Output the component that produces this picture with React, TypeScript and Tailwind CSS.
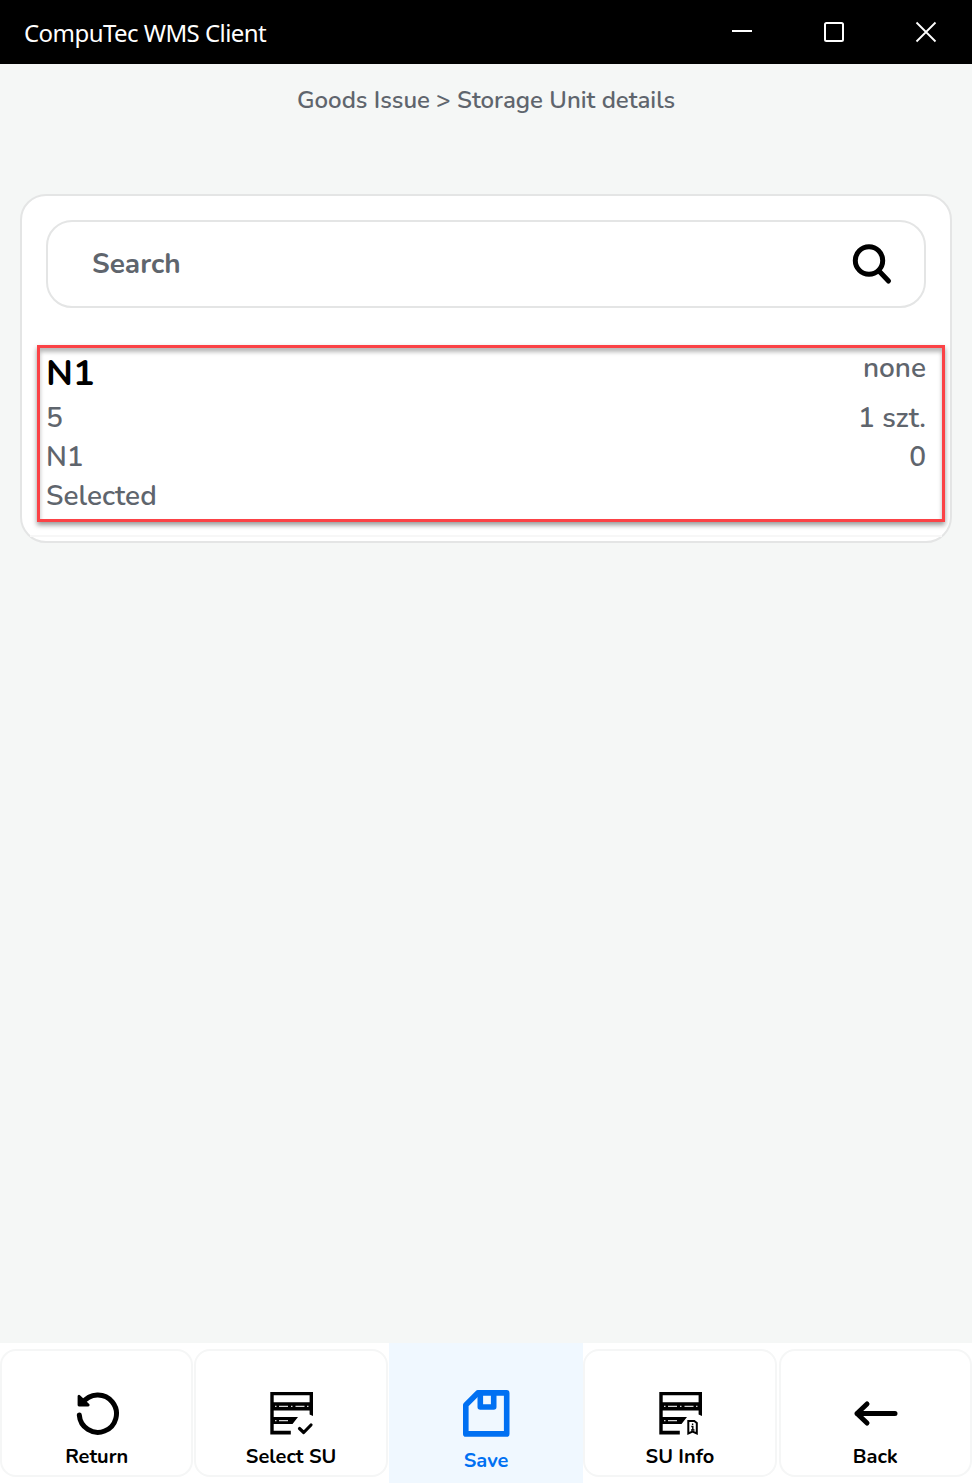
import type { ReactNode } from "react";

const Rack = ({ children }: { children: ReactNode }) => (
  <svg viewBox="0 0 48 48" className="h-12 w-12">
    <path
      d="M2.300 2H45v24l-3.400-1.600V20.600H5.700V27H30l-5.500 7H5.700v6.800h17.100v3.700H2.300ZM5.700 5.200v7H41.600v-7Z"
      fill="#000"
      fillRule="evenodd"
    />
    <path
      d="M11 16.300h9M27.500 16.300h9M7 16.300h1.500M23 16.300h1.500M39 16.300h1.500M11 30.600h9M7 30.600h1.500"
      stroke="#d4d4d4"
      strokeWidth="1.300"
    />
    {children}
  </svg>
);

const ReturnIcon = () => (
  <svg viewBox="0 0 48 48" className="h-12 w-12" fill="none" stroke="#000" strokeLinecap="round">
    <path d="M6.300 25A18.600 18.600 0 1 0 9.500 13.200" strokeWidth="5" />
    <path d="M6 6.200v8.800h9.200Z" fill="#000" strokeWidth="2.800" strokeLinejoin="round" />
  </svg>
);

const SelectIcon = () => (
  <Rack>
    <path d="m31.500 38.500 4.200 4L43 35" fill="none" stroke="#000" strokeWidth="3.200" strokeLinecap="round" strokeLinejoin="round" />
  </Rack>
);

const InfoIcon = () => (
  <Rack>
    <path d="M31.300 31h6l2.500 2v10.500l-4.200-2-4.300 2Z" fill="none" stroke="#000" strokeWidth="2" />
    <path d="M35.600 33.500v1.500M34.300 36.500h1.500V40M34 40h3.500" fill="none" stroke="#000" strokeWidth="1.400" />
  </Rack>
);

const SaveIcon = () => (
  <svg viewBox="0 0 48 48" className="h-12 w-12" fill="none" stroke="#0070f2" strokeWidth="5.600" strokeLinejoin="round">
    <path d="M15.800 2.900H44.700V43.900H3.800V14.900Z" />
    <path d="M18.300 2.900V17H31.700V2.900" />
  </svg>
);

const BackIcon = () => (
  <svg viewBox="0 0 48 48" className="h-12 w-12" fill="none" stroke="#000" strokeWidth="5" strokeLinecap="round" strokeLinejoin="round">
    <path d="M5 23.500H43M15 14 5 23.500 15 33" />
  </svg>
);

const actions = [
  { label: "Return", icon: <ReturnIcon />, shift: "ml-px" },
  { label: "Select SU", icon: <SelectIcon />, shift: "ml-px" },
  { label: "Save", icon: <SaveIcon />, shift: "", active: true },
  { label: "SU Info", icon: <InfoIcon />, shift: "ml-[2px]" },
  { label: "Back", icon: <BackIcon />, shift: "ml-px" },
];

export default function App() {
  return (
    <div className="flex h-[1483px] w-[972px] flex-col overflow-hidden bg-[#f5f7f6] font-['Nunito','Lato',sans-serif] text-[#5f656d]">
      <header className="flex h-16 shrink-0 items-center justify-between bg-black pr-[34px] pl-6 text-white">
        <h1 className="pt-px font-['Segoe_UI','Noto_Sans',sans-serif] text-[24px] leading-8 tracking-[-0.56px] whitespace-nowrap">
          CompuTec WMS Client
        </h1>
        <div className="flex gap-[68px]">
          <svg viewBox="0 0 24 24" className="h-6 w-6"><path d="M2 11h20" stroke="#fff" strokeWidth="2" /></svg>
          <svg viewBox="0 0 24 24" className="h-6 w-6"><rect x="3" y="3" width="18" height="18" rx="1.500" fill="none" stroke="#fff" strokeWidth="2" /></svg>
          <svg viewBox="0 0 24 24" className="h-6 w-6"><path d="m2.500 2.500 19 19m0-19-19 19" stroke="#fff" strokeWidth="1.800" /></svg>
        </div>
      </header>

      <div className="mt-5 flex h-8 shrink-0 items-center justify-center text-[24px] font-semibold whitespace-nowrap">
        Goods Issue &gt; Storage Unit details
      </div>

      <main className="mx-5 mt-[78px] flex h-[349px] shrink-0 flex-col rounded-[26px] border-2 border-[#e4e5e5] bg-white">
        <div className="mx-6 mt-6 flex h-[88px] shrink-0 items-center justify-between rounded-[26px] border-2 border-[#e4e5e5] pr-[30px] pl-11">
          <span className="text-[28px] leading-9 font-bold">Search</span>
          <svg viewBox="0 0 44 44" className="h-11 w-11" fill="none" stroke="#000" strokeWidth="5" strokeLinecap="round">
            <circle cx="19" cy="18.500" r="13.700" />
            <path d="m29 29 9.500 10" />
          </svg>
        </div>
        <section className="mt-[37px] ml-[15px] flex h-[177px] w-[908px] shrink-0 justify-between border-[3px] border-[#fb4246] pr-4 pl-[6px] text-[28px] leading-[39px] font-semibold shadow-[0_3px_5px_#00000068,inset_0_4px_4px_#00000048]">
          <div className="flex flex-col">
            <strong className="mt-[6px] mb-[5px] text-[36px] leading-10 font-bold text-black">N1</strong>
            <span>5</span>
            <span>N1</span>
            <span>Selected</span>
          </div>
          <div className="flex flex-col items-end">
            <span className="mt-[1px] mb-[11px]">none</span>
            <span>1 szt.</span>
            <span>0</span>
          </div>
        </section>
        <div className="mx-2 mt-[13px] h-0.5 shrink-0 bg-[#f7f7f7]" />
      </main>

      <nav className="mt-auto grid h-[140px] shrink-0 grid-cols-5 bg-white text-[20px] font-bold">
        {actions.map(({ label, icon, shift, active }) => (
          <button
            key={label}
            className={
              active
                ? "flex h-[140px] flex-col items-center bg-[#f0f8ff] pt-[47px] text-[#0070f2]"
                : "mt-[6px] mr-px flex h-[128px] flex-col items-center rounded-[16px] border-2 border-[#f5f6f6] pt-[39px] text-black last:mr-0 last:ml-px"
            }
          >
            <span className={shift}>{icon}</span>
            <span className={active ? "mt-[9px] leading-7" : "mt-[5px] leading-7"}>{label}</span>
          </button>
        ))}
      </nav>
    </div>
  );
}
